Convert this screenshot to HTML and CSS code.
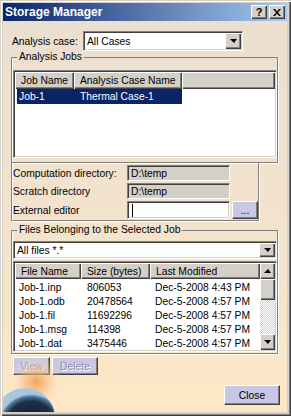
FILE: index.html
```html
<!DOCTYPE html>
<html lang="en">

<head>
  <meta charset="UTF-8">
  <title>Storage Manager</title>
  <link rel="stylesheet" href="styles.css">
</head>

<body>
  <div class="window">
    <div class="titlebar">
      <span class="title">Storage Manager</span>
      <span class="tbtn">?</span>
      <span class="tbtn">
        <svg width="8" height="7" viewBox="0 0 8 7"><path d="M0 0h2l2 2.5 2-2.5h2L5 3.5 8 7H6L4 4.5 2 7H0l3-3.5z" /></svg>
      </span>
    </div>

    <div class="client">
      <svg class="globe" width="80" height="60" viewBox="0 0 80 60">
        <defs>
          <radialGradient id="glow" cx="0.5" cy="0.5" r="0.5">
            <stop offset="0" stop-color="#f49a48" stop-opacity="0.9" />
            <stop offset="0.45" stop-color="#f8b878" stop-opacity="0.55" />
            <stop offset="1" stop-color="#fde8c6" stop-opacity="0" />
          </radialGradient>
          <radialGradient id="earth" cx="0.6" cy="0.65" r="0.55">
            <stop offset="0" stop-color="#0c1424" />
            <stop offset="0.78" stop-color="#1e2f48" />
            <stop offset="0.92" stop-color="#4e7396" />
            <stop offset="1" stop-color="#a9c6df" />
          </radialGradient>
        </defs>
        <circle cx="33" cy="30" r="26" fill="url(#glow)" />
        <circle cx="22" cy="66" r="30" fill="url(#earth)" />
      </svg>

      <div class="case-row">
        <span class="case-label">Analysis case:</span>
        <div class="combo case-combo">
          <span class="combo-text">All Cases</span>
          <span class="drop"><i class="arrow-down"></i></span>
        </div>
      </div>

      <fieldset class="group jobs">
        <legend>Analysis Jobs</legend>
        <div class="list jobs-list">
          <div class="thead">
            <span class="th th-job">Job Name</span>
            <span class="th th-case">Analysis Case Name</span>
            <span class="th th-fill"></span>
          </div>
          <div class="job-row selected">
            <span class="job-name">Job-1</span>
            <span class="job-case">Thermal Case-1</span>
          </div>
        </div>
      </fieldset>

      <div class="dirs">
        <span class="dir-label">Computation directory:</span>
        <span class="field ro">D:\temp</span>
        <span></span>
        <span class="dir-label">Scratch directory</span>
        <span class="field ro">D:\temp</span>
        <span></span>
        <span class="dir-label">External editor</span>
        <span class="field edit"><i class="caret"></i></span>
        <span class="btn more">...</span>
      </div>

      <fieldset class="group files">
        <legend>Files Belonging to the Selected Job</legend>
        <div class="combo filter-combo">
          <span class="combo-text">All files *.*</span>
          <span class="drop"><i class="arrow-down"></i></span>
        </div>
        <div class="list files-list">
          <div class="files-main">
            <div class="thead">
              <span class="th th-file">File Name</span>
              <span class="th th-size">Size (bytes)</span>
              <span class="th th-date">Last Modified</span>
            </div>
            <div class="rows">
              <div class="file-row"><span>Job-1.inp</span><span>806053</span><span>Dec-5-2008 4:43 PM</span></div>
              <div class="file-row"><span>Job-1.odb</span><span>20478564</span><span>Dec-5-2008 4:57 PM</span></div>
              <div class="file-row"><span>Job-1.fil</span><span>11692296</span><span>Dec-5-2008 4:57 PM</span></div>
              <div class="file-row"><span>Job-1.msg</span><span>114398</span><span>Dec-5-2008 4:57 PM</span></div>
              <div class="file-row"><span>Job-1.dat</span><span>3475446</span><span>Dec-5-2008 4:57 PM</span></div>
            </div>
          </div>
          <div class="scrollbar">
            <span class="sb-btn"><i class="arrow-up"></i></span>
            <span class="sb-thumb"></span>
            <span class="sb-track"></span>
            <span class="sb-btn"><i class="arrow-down"></i></span>
          </div>
        </div>
      </fieldset>

      <div class="actions">
        <span class="btn disabled view">View</span>
        <span class="btn disabled delete">Delete</span>
      </div>

      <span class="btn close">Close</span>
    </div>
  </div>
</body>

</html>
```

FILE: styles.css
```css
* {
  margin: 0;
  padding: 0;
  box-sizing: border-box;
}

body {
  width: 291px;
  height: 416px;
  overflow: hidden;
  font-family: "Liberation Sans", Arial, sans-serif;
  font-size: 10.3px;
  color: #000;
}

.window {
  display: flex;
  flex-direction: column;
  width: 291px;
  height: 416px;
  padding: 3px 4px 4px 3px;
  background: #d4d0c8;
  box-shadow: inset 1px 1px 0 #d4d0c8, inset 2px 2px 0 #fff, inset -1px -1px 0 #404040, inset -2px -2px 0 #808080;
}

/* title bar */
.titlebar {
  display: flex;
  align-items: center;
  gap: 2px;
  height: 18px;
  padding: 0 2px 0 2px;
  background: linear-gradient(to right, #0a246a, #a6caf0);
}

.title {
  flex: 1;
  color: #fff;
  font-weight: bold;
  font-size: 12px;
}

.tbtn {
  display: flex;
  align-items: center;
  justify-content: center;
  width: 16px;
  height: 14px;
  background: #d4d0c8;
  box-shadow: inset 1px 1px 0 #fff, inset -1px -1px 0 #404040, inset -2px -2px 0 #808080;
  font-weight: bold;
  font-size: 11px;
  line-height: 14px;
}

/* client area */
.client {
  position: relative;
  flex: 1;
  display: flex;
  flex-direction: column;
  overflow: hidden;
  background: linear-gradient(to bottom, #ebdfd1 0%, #f3e3cd 50%, #fde8c6 100%);
}

.globe {
  position: absolute;
  left: 0;
  bottom: 0;
}

.case-row {
  display: flex;
  align-items: center;
  height: 20px;
  margin: 10px 0 0 9px;
}

.case-label {
  width: 71px;
}

.combo {
  display: flex;
  align-items: center;
  padding: 1px;
  background: #fff;
  border: 1px solid;
  border-color: #808080 #fff #fff #808080;
  box-shadow: inset 1px 1px 0 #404040, inset -1px -1px 0 #d4d0c8;
}

.case-combo {
  width: 160px;
  height: 20px;
}

.combo-text {
  flex: 1;
  padding-left: 2px;
}

.drop {
  display: flex;
  align-items: center;
  justify-content: center;
  width: 16px;
  height: 100%;
  background: #d4d0c8;
  box-shadow: inset 1px 1px 0 #fff, inset -1px -1px 0 #404040, inset -2px -2px 0 #808080;
}

.arrow-down,
.arrow-up {
  width: 0;
  height: 0;
  border-left: 4px solid transparent;
  border-right: 3px solid transparent;
}

.arrow-down {
  border-top: 4px solid #000;
}

.arrow-up {
  border-bottom: 4px solid #000;
}

/* group boxes: grey line with a white line beside it */
.group {
  min-width: 0;
  margin: 0 9px 0 8px;
  padding: 0 0 0 1px;
  border: 1px solid #808080;
  box-shadow: inset 1px 0 0 #fff, 1px 1px 0 #fff;
}

.group legend {
  margin-left: 4px;
  padding: 0 2px;
  line-height: 12px;
}

.jobs {
  padding-bottom: 4px;
}

.list {
  padding: 1px;
  background: #fff;
  border: 1px solid;
  border-color: #808080 #fff #fff #808080;
  box-shadow: inset 1px 1px 0 #404040, inset -1px -1px 0 #d4d0c8;
}

.jobs-list {
  height: 88px;
  margin-top: 7px;
}

.thead {
  display: flex;
  height: 17px;
}

.th {
  display: flex;
  align-items: center;
  padding-left: 6px;
  background: #d4d0c8;
  box-shadow: inset 1px 1px 0 #fff, inset -1px -1px 0 #404040, inset -2px -2px 0 #808080;
}

.th-job {
  width: 59px;
}

.th-case {
  width: 108px;
}

.th-fill {
  flex: 1;
}

.job-row {
  display: flex;
  align-items: center;
  width: 165px;
  height: 15px;
  margin-left: 2px;
}

.job-row.selected {
  background: #0a246a;
  color: #fff;
}

.job-name {
  width: 57px;
  padding-left: 2px;
}

.job-case {
  padding-left: 6px;
}

/* directories panel */
.dirs {
  display: grid;
  grid-template-columns: 114px 103px 28px;
  grid-template-rows: 16px 16px 18px;
  row-gap: 2px;
  margin: -1px 28px 0 8px;
  padding: 2px 0 1px 1px;
  border: 1px solid #808080;
  box-shadow: inset 1px 1px 0 #fff, 1px 1px 0 #fff;
}

.dir-label {
  display: flex;
  align-items: center;
}

.field {
  display: flex;
  align-items: center;
  padding-left: 3px;
  border: 1px solid;
  border-color: #808080 #fff #fff #808080;
  box-shadow: inset 1px 1px 0 #404040, inset -1px -1px 0 #d4d0c8;
}

.field.ro {
  background: #d4d0c8;
}

.field.edit {
  background: #fff;
}

.caret {
  width: 1px;
  height: 13px;
  margin-left: 1px;
  background: #000;
}

/* buttons */
.btn {
  display: flex;
  align-items: center;
  justify-content: center;
  background: #c8c8e4;
  border: 1px solid;
  border-color: #fff #404040 #404040 #fff;
  box-shadow: inset -1px -1px 0 #808080;
}

.more {
  align-items: flex-end;
  margin-left: 2px;
  padding-bottom: 2px;
}

/* files group */
.files {
  margin-top: 3px;
  padding-bottom: 1px;
}

.filter-combo {
  height: 18px;
  margin-top: 5px;
}

.files-list {
  display: flex;
  height: 91px;
  margin-top: 2px;
}

.files-main {
  flex: 1;
}

.files-list .thead {
  height: 16px;
}

.th-file {
  width: 66px;
}

.th-size {
  width: 69px;
}

.th-date {
  width: 110px;
}

.rows {
  padding-top: 1px;
}

.file-row {
  display: flex;
  align-items: center;
  height: 14px;
}

.file-row span:nth-child(1) {
  width: 66px;
  padding-left: 4px;
}

.file-row span:nth-child(2) {
  width: 69px;
  padding-left: 6px;
}

.file-row span:nth-child(3) {
  padding-left: 5px;
}

.scrollbar {
  display: flex;
  flex-direction: column;
  width: 16px;
}

.sb-btn,
.sb-thumb {
  display: flex;
  align-items: center;
  justify-content: center;
  height: 16px;
  background: #d4d0c8;
  box-shadow: inset 1px 1px 0 #fff, inset -1px -1px 0 #404040, inset -2px -2px 0 #808080;
}

.sb-thumb {
  height: 21px;
}

.sb-track {
  flex: 1;
  background: repeating-conic-gradient(#d4d0c8 0 25%, #fff 0 50%) 0 0 / 2px 2px;
}

/* bottom buttons */
.actions {
  display: flex;
  gap: 2px;
  margin: 3px 0 0 10px;
}

.disabled {
  height: 18px;
  color: #8c8ca8;
  text-shadow: 1px 1px 0 #fff;
}

.view {
  width: 37px;
}

.delete {
  width: 46px;
}

.close {
  align-self: flex-end;
  width: 56px;
  height: 20px;
  margin: 10px 7px 0 0;
}
```
